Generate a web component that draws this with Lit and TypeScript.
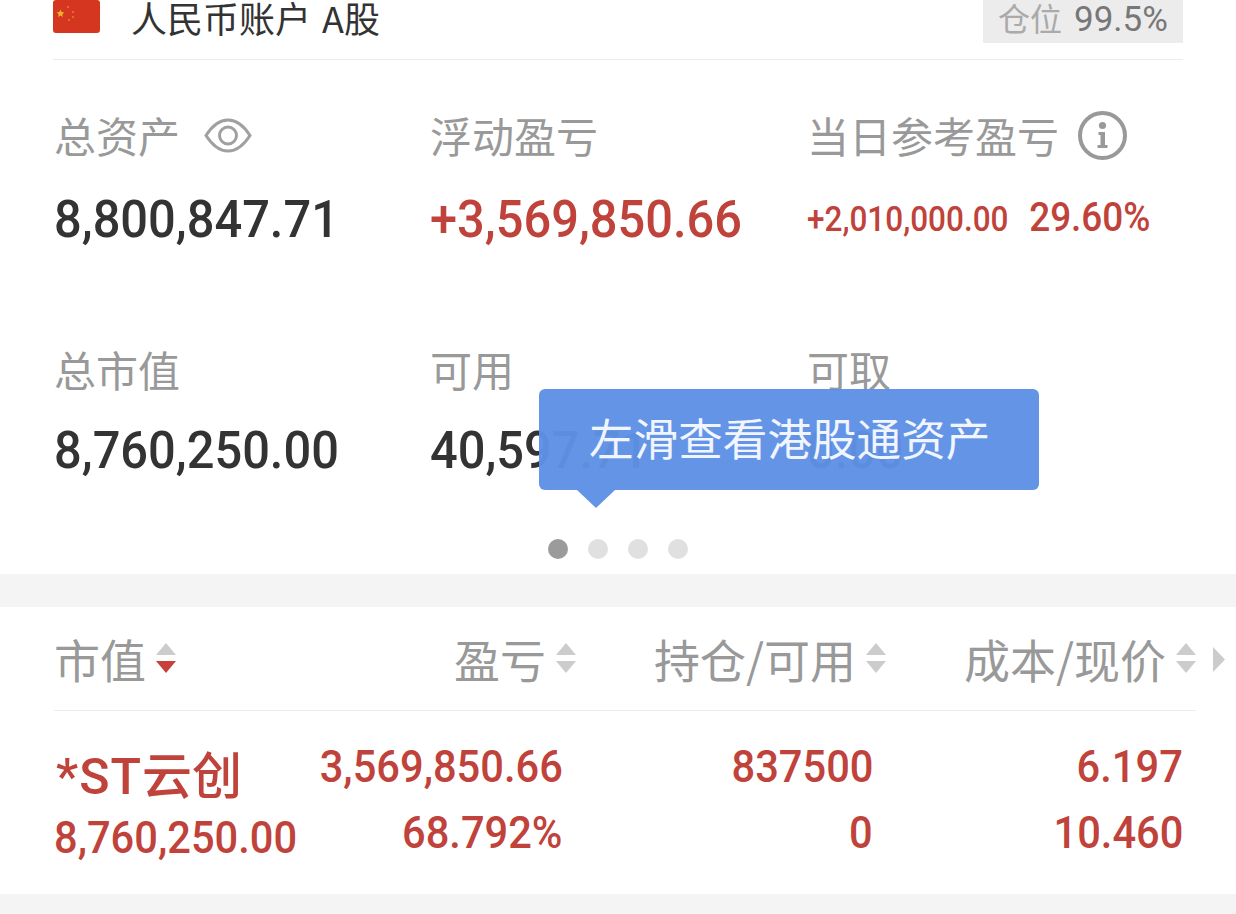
import { html, css, LitElement } from 'lit';
import { customElement } from 'lit/decorators.js';

const sortIcon = (active = false) => html`
    <svg class="sort" width="20" height="30" viewBox="0 0 20 30">
        <path d="M10 0 L20 12 H0 Z" fill="#cccccc" />
        <path d="M0 18 H20 L10 30 Z" fill=${active ? '#c8403a' : '#cccccc'} />
    </svg>
`;

@customElement('app-root')
export class AppRoot extends LitElement {
    static styles = css`
        :host {
            display: block;
            width: 1236px;
            height: 914px;
            overflow: hidden;
            background: #f4f4f4;
            font-family: 'Noto Sans CJK SC', 'Noto Sans', sans-serif;
        }
        .account {
            position: relative;
            height: 574px;
            background: #fff;
            margin-bottom: 33px;
        }
        .header {
            display: flex;
            align-items: flex-start;
            height: 59px;
            margin: 0 53px;
            border-bottom: 1px solid #ececec;
        }
        .flag {
            display: block;
            flex: none;
            margin-right: 31px;
        }
        .title {
            flex: 1;
            font-size: 36px;
            line-height: 32px;
            padding-top: 1px;
            color: #333;
            white-space: nowrap;
        }
        .title span {
            margin-left: 11px;
        }
        .badge {
            width: 200px;
            height: 43px;
            box-sizing: border-box;
            padding: 1px 0 0 15px;
            background: #ececec;
            color: #aaa;
            font-size: 32px;
            line-height: 32px;
            white-space: nowrap;
        }
        .badge b {
            margin-left: 12px;
            font-size: 35px;
            font-weight: 400;
            color: #777;
            font-family: Roboto, sans-serif;
        }
        .metrics {
            display: grid;
            grid-template-columns: 376px 377px 1fr;
            grid-auto-rows: auto;
            row-gap: 99px;
            padding: 50px 0 0 54px;
        }
        .label {
            display: flex;
            align-items: center;
            height: 50px;
            font-size: 42px;
            line-height: 50px;
            color: #999;
            white-space: nowrap;
        }
        .label svg {
            display: block;
            flex: none;
        }
        .eye {
            margin-left: 24px;
        }
        .info {
            margin-left: 19px;
        }
        .value {
            height: 60px;
            margin-top: 25px;
            line-height: 60px;
            font-size: 52px;
            color: #333;
            white-space: nowrap;
        }
        .low .value {
            margin-top: 22px;
        }
        .num {
            display: inline-block;
            font-family: Roboto, sans-serif;
            font-weight: 500;
            transform: scaleX(0.938);
            transform-origin: left center;
            white-space: pre;
        }
        .red {
            color: #bf423b;
        }
        .small {
            font-size: 35px;
            vertical-align: 6px;
            transform: scaleX(0.9);
        }
        .small .mid {
            margin-left: 23px;
            font-size: 41px;
        }
        .dots {
            display: flex;
            justify-content: flex-start;
            gap: 20px;
            margin: 63px 0 0 548px;
        }
        .dots i {
            display: block;
            width: 20px;
            height: 20px;
            border-radius: 50%;
            background: #e0e0e0;
        }
        .dots i.on {
            background: #9b9b9b;
        }
        .tip {
            position: absolute;
            left: 539px;
            top: 389px;
            width: 500px;
            height: 101px;
            box-sizing: border-box;
            padding-left: 50px;
            border-radius: 6px;
            background: rgba(95, 145, 229, 0.97);
            color: #f0f5ff;
            font-size: 44.6px;
            line-height: 95px;
            white-space: nowrap;
        }
        .tip::after {
            content: '';
            position: absolute;
            left: 38px;
            top: 101px;
            border-style: solid;
            border-width: 18px 19px 0 19px;
            border-color: rgba(95, 145, 229, 0.97) transparent transparent transparent;
        }
        .table {
            position: relative;
            height: 287px;
            background: #fff;
        }
        .head,
        .row {
            display: grid;
            grid-template-columns: 242px 280px 310px 310px;
            margin-left: 54px;
            width: 1142px;
        }
        .head {
            height: 103px;
            box-sizing: content-box;
            border-bottom: 1px solid #ececec;
        }
        .head div {
            display: flex;
            align-items: center;
            justify-content: flex-end;
            gap: 10px;
            padding-bottom: 2px;
            font-size: 46px;
            color: #999;
            white-space: nowrap;
        }
        .head div:first-child {
            justify-content: flex-start;
        }
        .sort {
            display: block;
            flex: none;
        }
        .more {
            position: absolute;
            left: 1213px;
            top: 40px;
            display: block;
        }
        .row {
            padding-top: 30px;
        }
        .cell {
            display: flex;
            flex-direction: column;
            align-items: flex-end;
            padding-right: 13px;
            font-size: 45px;
            line-height: 52px;
            row-gap: 14px;
            color: #bf423b;
        }
        .cell .num {
            transform: scaleX(0.925);
            transform-origin: right center;
        }
        .cell.name {
            align-items: flex-start;
            padding-right: 0;
            row-gap: 0;
        }
        .cell.name .num {
            transform-origin: left center;
        }
        .stock {
            height: 71px;
            padding-left: 2px;
            line-height: 62px;
            font-size: 50px;
            font-weight: 500;
            white-space: nowrap;
        }
        .stock span {
            font-family: Roboto, sans-serif;
            letter-spacing: 1px;
        }
    `;

    render() {
        return html`
            <section class="account">
                <div class="header">
                    <svg class="flag" width="47" height="33" viewBox="0 0 47 33">
                        <rect width="47" height="33" rx="3" fill="#d4361f" />
                        <path d="M7.5 9.5 l1.1 2.6 2.8.3-2.1 1.9.6 2.7-2.4-1.4-2.4 1.4.6-2.7-2.1-1.9 2.8-.3 z" fill="#f0b42c" />
                        <circle cx="15" cy="7" r="1" fill="#e4802a" />
                        <circle cx="20" cy="12" r="1" fill="#e4802a" />
                        <circle cx="20" cy="17" r="1" fill="#e4802a" />
                        <circle cx="16" cy="20" r="1" fill="#e4802a" />
                    </svg>
                    <div class="title">人民币账户<span>A股</span></div>
                    <div class="badge">仓位<b>99.5%</b></div>
                </div>

                <div class="metrics">
                    <div>
                        <div class="label">
                            总资产
                            <svg class="eye" width="48" height="35" viewBox="0 0 48 35" fill="none" stroke="#a0a0a0" stroke-width="3">
                                <path d="M2 17.5 C10 5 17 2 24 2 C31 2 38 5 46 17.5 C38 30 31 33 24 33 C17 33 10 30 2 17.5 Z" />
                                <circle cx="24" cy="17.5" r="8.5" />
                            </svg>
                        </div>
                        <div class="value"><span class="num">8,800,847.71</span></div>
                    </div>
                    <div>
                        <div class="label">浮动盈亏</div>
                        <div class="value red"><span class="num">+3,569,850.66</span></div>
                    </div>
                    <div>
                        <div class="label">
                            当日参考盈亏
                            <svg class="info" width="49" height="49" viewBox="0 0 49 49" fill="none">
                                <circle cx="24.5" cy="24.5" r="22.5" stroke="#999" stroke-width="4" />
                                <circle cx="24.5" cy="14.5" r="3.6" fill="#999" />
                                <path d="M20.5 21 h6.5 v13 h2.5 v3 h-10 v-3 h3 v-10 h-2 z" fill="#999" />
                            </svg>
                        </div>
                        <div class="value red">
                            <span class="num small">+2,010,000.00<span class="mid">29.60%</span></span>
                        </div>
                    </div>
                    <div class="low">
                        <div class="label">总市值</div>
                        <div class="value"><span class="num">8,760,250.00</span></div>
                    </div>
                    <div class="low">
                        <div class="label">可用</div>
                        <div class="value"><span class="num">40,597.71</span></div>
                    </div>
                    <div class="low">
                        <div class="label">可取</div>
                        <div class="value"><span class="num">0.00</span></div>
                    </div>
                </div>

                <div class="dots"><i class="on"></i><i></i><i></i><i></i></div>
                <div class="tip">左滑查看港股通资产</div>
            </section>

            <section class="table">
                <div class="head">
                    <div>市值 ${sortIcon(true)}</div>
                    <div>盈亏 ${sortIcon()}</div>
                    <div>持仓/可用 ${sortIcon()}</div>
                    <div>成本/现价 ${sortIcon()}</div>
                </div>
                <svg class="more" width="12" height="25" viewBox="0 0 12 25">
                    <path d="M0 0 L12 12.5 L0 25 Z" fill="#cccccc" />
                </svg>
                <div class="row">
                    <div class="cell name">
                        <div class="stock"><span>*ST</span>云创</div>
                        <span class="num">8,760,250.00</span>
                    </div>
                    <div class="cell">
                        <span class="num">3,569,850.66</span>
                        <span class="num">68.792%</span>
                    </div>
                    <div class="cell">
                        <span class="num">837500</span>
                        <span class="num">0</span>
                    </div>
                    <div class="cell">
                        <span class="num">6.197</span>
                        <span class="num">10.460</span>
                    </div>
                </div>
            </section>
        `;
    }
}
